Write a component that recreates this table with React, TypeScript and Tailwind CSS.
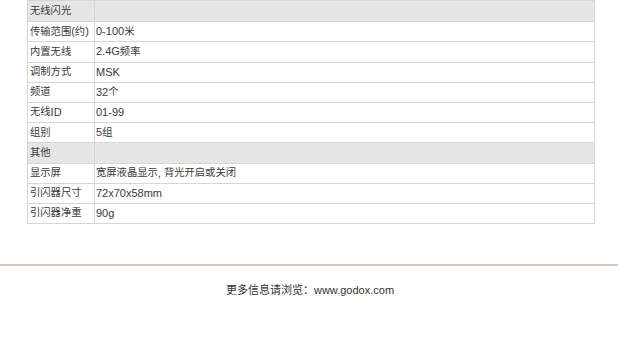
import React from "react";

const rows: { a: string; b: string; head?: boolean }[] = [
  { a: "无线闪光", b: "", head: true },
  { a: "传输范围(约)", b: "0-100米" },
  { a: "内置无线", b: "2.4G频率" },
  { a: "调制方式", b: "MSK" },
  { a: "频道", b: "32个" },
  { a: "无线ID", b: "01-99" },
  { a: "组别", b: "5组" },
  { a: "其他", b: "", head: true },
  { a: "显示屏", b: "宽屏液晶显示, 背光开启或关闭" },
  { a: "引闪器尺寸", b: "72x70x58mm" },
  { a: "引闪器净重", b: "90g" },
];

function Mixed({ t }: { t: string }) {
  const parts = t.match(/[\u3000-\u9fff\uff00-\uffef]+|[^\u3000-\u9fff\uff00-\uffef]+/g) || [];
  return (
    <>
      {parts.map((p, i) =>
        /[\u3000-\u9fff\uff00-\uffef]/.test(p) ? (
          <span key={i} className="text-[10.3px]">
            {p}
          </span>
        ) : (
          <span key={i}>{p}</span>
        )
      )}
    </>
  );
}

export default function App() {
  return (
    <div
      className="w-[620px] h-[344px] bg-white overflow-hidden text-[#3a3a3a] text-[11px]"
      style={{ fontFamily: '"Liberation Sans", "Noto Sans CJK SC", sans-serif' }}
    >
      <div className="pl-[27px] pr-[25px]">
        <div className="border border-[#d6d6d6]">
          {rows.map((r, i) => (
            <div
              key={i}
              className={`flex h-[20.2px] ${i > 0 ? "border-t border-[#d6d6d6]" : ""} ${
                r.head ? "bg-[#e6e6e6]" : "bg-white"
              }`}
            >
              <div className="w-[67px] shrink-0 border-r border-[#d6d6d6] pl-[2px] flex items-center leading-none whitespace-pre">
                <Mixed t={r.a} />
              </div>
              <div className="flex-1 pl-[1px] flex items-center leading-none whitespace-pre">
                <Mixed t={r.b} />
              </div>
            </div>
          ))}
        </div>
      </div>
      <div className="mt-[40px] h-[2px] w-[618px] bg-[#dcc6b6]" />
      <div className="mt-[16px] text-center text-[11px] text-[#333]">更多信息请浏览：www.godox.com</div>
    </div>
  );
}
